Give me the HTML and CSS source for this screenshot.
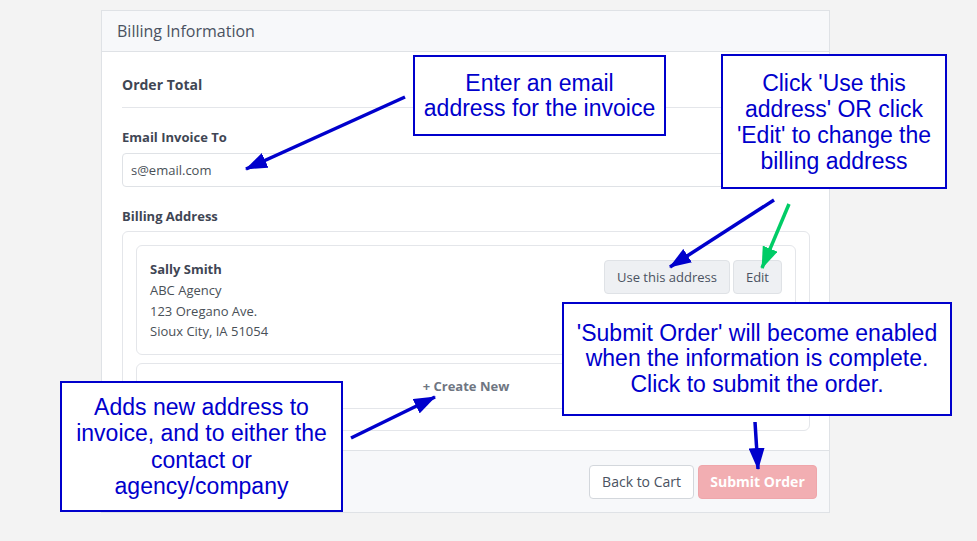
FILE: index.html
```html
<!DOCTYPE html>
<html>
<head>
  <title>Billing Information</title>
  <link rel="stylesheet" href="styles.css">
</head>
<body>
  <div class="page">
    <div class="card">
      <div class="card-header">Billing Information</div>
      <div class="card-body">
        <div class="section-title">Order Total</div>
        <label class="field-label">Email Invoice To</label>
        <input class="field-input" type="text" value="s@email.com">
        <div class="field-label billing-label">Billing Address</div>
        <div class="address-list">
          <div class="address-card">
            <div class="address">
              <div class="address-name">Sally Smith</div>
              <div>ABC Agency</div>
              <div>123 Oregano Ave.</div>
              <div>Sioux City, IA 51054</div>
            </div>
            <div class="address-actions">
              <button class="btn btn-light">Use this address</button>
              <button class="btn btn-light">Edit</button>
            </div>
          </div>
          <div class="address-card create-new">+ Create New</div>
        </div>
      </div>
      <div class="card-footer">
        <button class="btn btn-outline">Back to Cart</button>
        <button class="btn btn-submit" disabled>Submit Order</button>
      </div>
    </div>

    <svg class="arrows" width="977" height="541">
      <defs>
        <marker id="head-blue" markerUnits="userSpaceOnUse" markerWidth="22" markerHeight="16" refX="21" refY="8" orient="auto">
          <polygon points="0,0 22,8 0,16" fill="#0000cc"/>
        </marker>
        <marker id="head-green" markerUnits="userSpaceOnUse" markerWidth="22" markerHeight="16" refX="21" refY="8" orient="auto">
          <polygon points="0,0 22,8 0,16" fill="#00cc66"/>
        </marker>
      </defs>
      <line x1="405" y1="97" x2="246" y2="169" stroke="#0000cc" stroke-width="3.5" marker-end="url(#head-blue)"/>
      <line x1="774" y1="200" x2="670" y2="267" stroke="#0000cc" stroke-width="3.5" marker-end="url(#head-blue)"/>
      <line x1="789" y1="204" x2="762" y2="268" stroke="#00cc66" stroke-width="3.5" marker-end="url(#head-green)"/>
      <line x1="351" y1="438" x2="435" y2="397" stroke="#0000cc" stroke-width="3.5" marker-end="url(#head-blue)"/>
      <line x1="755" y1="422" x2="758" y2="469" stroke="#0000cc" stroke-width="3.5" marker-end="url(#head-blue)"/>
    </svg>

    <div class="callout callout-email">Enter an email<br>address for the invoice</div>
    <div class="callout callout-edit">Click 'Use this<br>address' OR click<br>'Edit' to change the<br>billing address</div>
    <div class="callout callout-submit">'Submit Order' will become enabled<br>when the information is complete.<br>Click to submit the order.</div>
    <div class="callout callout-create">Adds new address to<br>invoice, and to either the<br>contact or<br>agency/company</div>
  </div>
</body>
</html>
```

FILE: styles.css
```css
body {
  margin: 0;
  background-color: #f3f3f3;
  font-family: "Open Sans", Arial, sans-serif;
  color: #495057;
}

.page {
  position: relative;
  width: 977px;
  height: 541px;
  padding-top: 10px;
  box-sizing: border-box;
}

.card {
  margin-left: 101px;
  width: 729px;
  background-color: #fff;
  border: 1px solid #dfe2e6;
  box-sizing: border-box;
}

.card-header {
  height: 40px;
  padding: 0 15px;
  display: flex;
  align-items: center;
  font-size: 16px;
  background-color: #f7f8fa;
  border-bottom: 1px solid #dfe2e6;
  color: #4a5261;
}

.card-body {
  padding: 22px 19px 19px 20px;
}

.section-title {
  font-size: 14px;
  font-weight: bold;
  line-height: 22px;
  color: #3f4654;
  padding-bottom: 11px;
  border-bottom: 1px solid #e4e6ea;
}

.field-label {
  display: block;
  margin-top: 19px;
  font-size: 13px;
  font-weight: bold;
  line-height: 20px;
  color: #3f4654;
}

.field-input {
  display: block;
  margin-top: 6px;
  width: 100%;
  height: 34px;
  box-sizing: border-box;
  padding: 0 8px;
  border: 1px solid #dfe2e6;
  border-radius: 4px;
  font-family: "Open Sans", Arial, sans-serif;
  font-size: 13px;
  color: #495057;
}

.billing-label {
  margin-top: 19px;
}

.address-list {
  margin-top: 5px;
  border: 1px solid #e4e6ea;
  border-radius: 6px;
  padding: 13px;
}

.address-card {
  display: flex;
  justify-content: space-between;
  align-items: flex-start;
  border: 1px solid #e4e6ea;
  border-radius: 6px;
  padding: 13px 13px 12px 13px;
  margin-bottom: 8px;
  font-size: 13px;
  line-height: 20.8px;
}

.address-name {
  font-weight: bold;
  color: #3f4654;
}

.address-actions {
  display: flex;
  gap: 3px;
  margin-top: 1px;
}

.create-new {
  justify-content: center;
  padding: 12px 0 11px;
  font-weight: bold;
  color: #6f7682;
}

.btn {
  height: 34px;
  box-sizing: border-box;
  padding: 0 12px;
  border-radius: 4px;
  font-family: "Open Sans", Arial, sans-serif;
  font-size: 14px;
  color: #4a5261;
  white-space: nowrap;
}

.btn-light {
  background-color: #eef0f3;
  border: 1px solid #dfe2e6;
  font-size: 13px;
}

.card-footer {
  display: flex;
  justify-content: flex-end;
  gap: 4px;
  padding: 14px 12px 13px;
  background-color: #f7f8fa;
  border-top: 1px solid #dfe2e6;
}

.btn-outline {
  background-color: #fff;
  border: 1px solid #d3d7dc;
}

.btn-submit {
  width: 119px;
  padding: 0;
  background-color: #f2aeb2;
  border: 1px solid #efa6ab;
  color: #fff;
  font-weight: bold;
}

.arrows {
  position: absolute;
  left: 0;
  top: 0;
}

.callout {
  position: absolute;
  display: flex;
  align-items: center;
  justify-content: center;
  box-sizing: border-box;
  background-color: #fff;
  border: 2px solid #0000cc;
  color: #0000cc;
  font-family: "Liberation Sans", Arial, sans-serif;
  font-size: 23px;
  text-align: center;
}

.callout-email {
  left: 413px;
  top: 55px;
  width: 253px;
  height: 81px;
  line-height: 25px;
}

.callout-edit {
  left: 721px;
  top: 54px;
  width: 226px;
  height: 135px;
  line-height: 26px;
}

.callout-submit {
  left: 562px;
  top: 302px;
  width: 390px;
  height: 114px;
  line-height: 25.5px;
}

.callout-create {
  left: 60px;
  top: 381px;
  width: 283px;
  height: 131px;
  line-height: 26.3px;
}
```
